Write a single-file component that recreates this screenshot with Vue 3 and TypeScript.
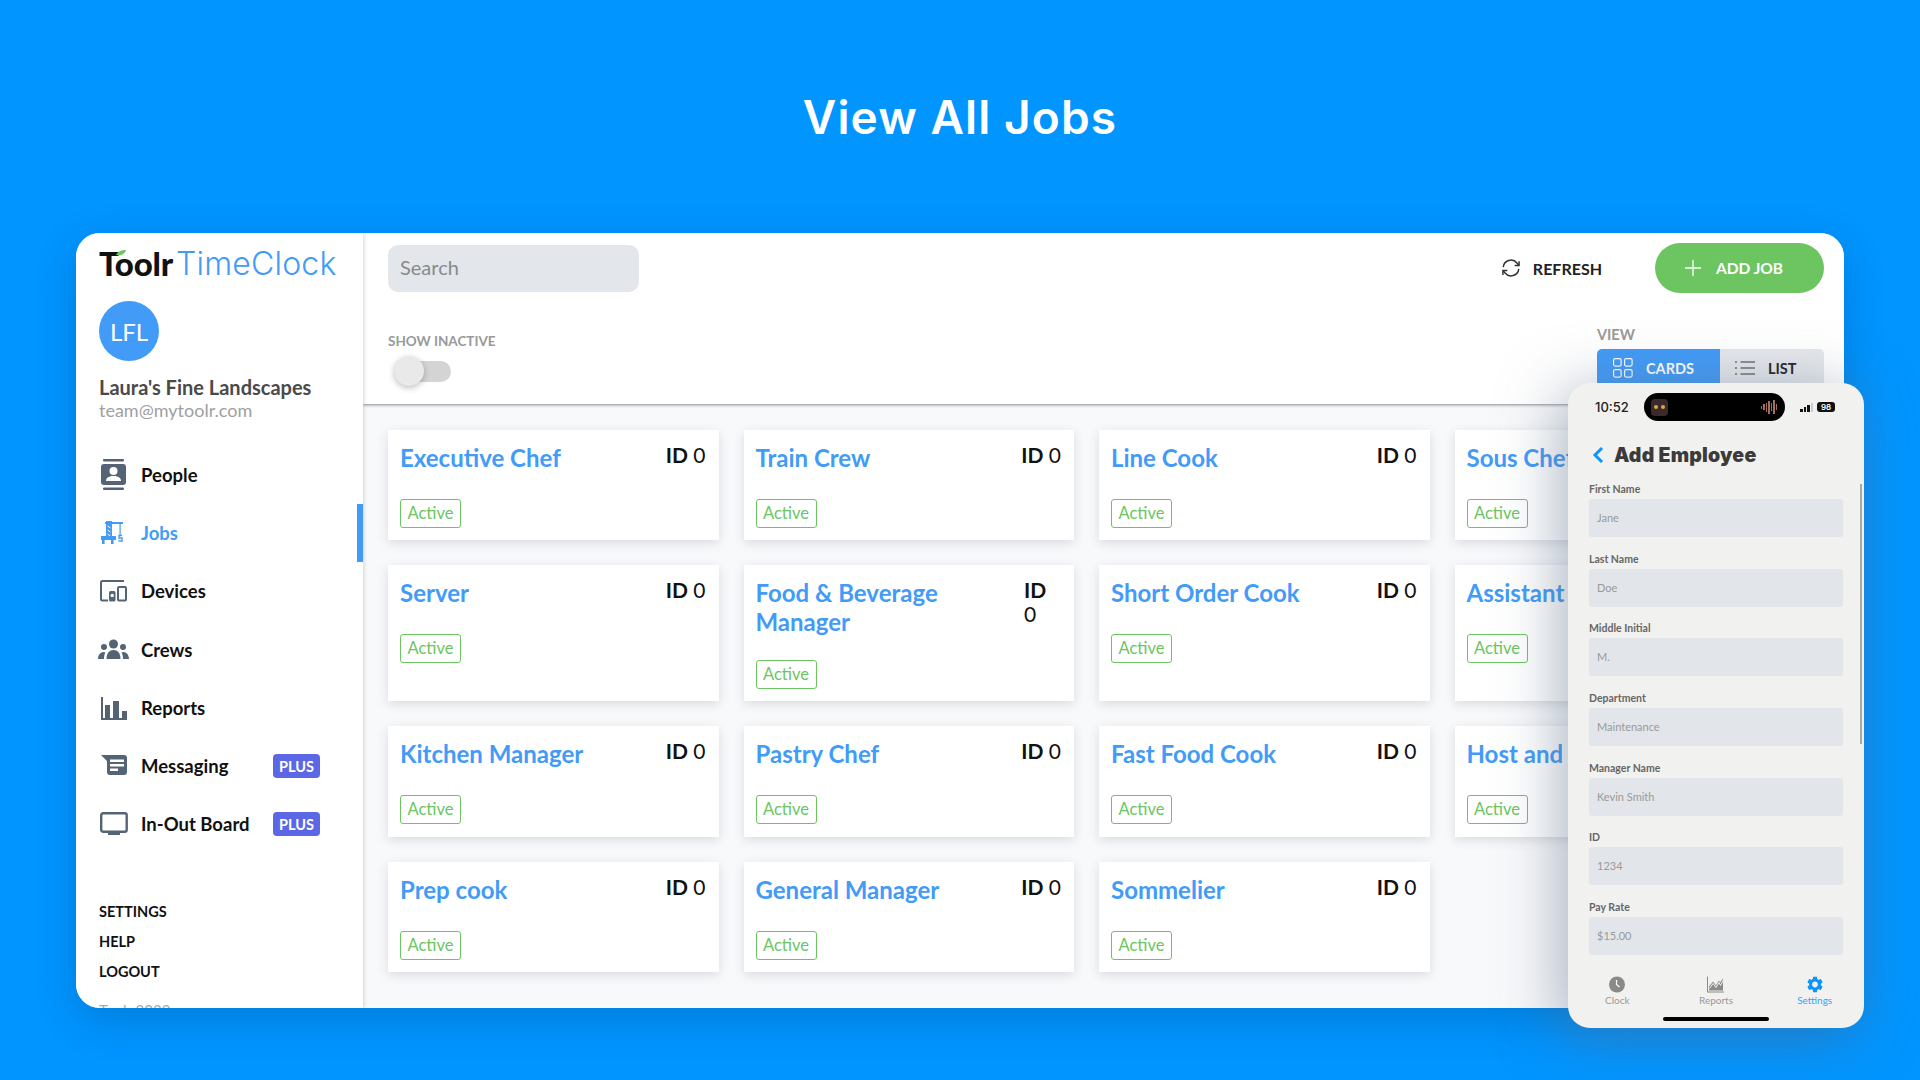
<script setup lang="ts">
interface Job { name: string; wrap?: boolean }
const jobs: Job[] = [
  { name: 'Executive Chef' }, { name: 'Train Crew' }, { name: 'Line Cook' }, { name: 'Sous Chef' },
  { name: 'Server' }, { name: 'Food & Beverage Manager', wrap: true }, { name: 'Short Order Cook' }, { name: 'Assistant Manager' },
  { name: 'Kitchen Manager' }, { name: 'Pastry Chef' }, { name: 'Fast Food Cook' }, { name: 'Host and Hostess' },
  { name: 'Prep cook' }, { name: 'General Manager' }, { name: 'Sommelier' },
]
const nav = [
  { key: 'people', label: 'People' },
  { key: 'jobs', label: 'Jobs', active: true },
  { key: 'devices', label: 'Devices' },
  { key: 'crews', label: 'Crews' },
  { key: 'reports', label: 'Reports' },
  { key: 'messaging', label: 'Messaging', plus: true },
  { key: 'board', label: 'In-Out Board', plus: true },
]
const fields = [
  ['First Name', 'Jane'], ['Last Name', 'Doe'], ['Middle Initial', 'M.'], ['Department', 'Maintenance'],
  ['Manager Name', 'Kevin Smith'], ['ID', '1234'], ['Pay Rate', '$15.00'],
]
const waves = [3, 6, 9, 13, 8, 14, 6]
</script>

<template>
  <div class="page">
    <h1 class="headline">View All Jobs</h1>

    <div class="window">
      <aside class="sidebar">
        <div class="logo">
          <span class="logo-a">Toolr</span><span class="logo-b">TimeClock</span>
          <svg class="leaf" viewBox="0 0 10 6"><path d="M0 5C2 1 6 0 10 0 9 4 5 6 0 5z" fill="#6cc561" /></svg>
        </div>
        <div class="avatar">LFL</div>
        <div class="org">Laura's Fine Landscapes</div>
        <div class="mail">team@mytoolr.com</div>

        <nav class="nav">
          <div v-for="n in nav" :key="n.key" class="nav-row" :class="{ active: n.active }">
            <svg class="nav-icon" viewBox="0 0 32 32">
              <g v-if="n.key === 'people'">
                <rect x="5" y="0" width="21" height="2.6" rx="1" />
                <rect x="3" y="5" width="25" height="21" rx="3" />
                <rect x="5" y="28.4" width="21" height="2.6" rx="1" />
                <circle cx="15.5" cy="12" r="4" fill="#fff" />
                <path d="M8 22c0-3.6 3.4-5 7.5-5s7.5 1.400 7.5 5z" fill="#fff" />
              </g>
              <g v-else-if="n.key === 'jobs'">
                <rect x="7" y="5" width="18" height="2" />
                <rect x="8" y="4" width="6" height="17" />
                <path d="M9.500 9l3 2M9.500 13l3 2M9.500 17l3 2" stroke="#fff" stroke-width="1" />
                <rect x="3" y="19" width="15" height="4" />
                <rect x="4" y="19" width="2.600" height="8" />
                <rect x="13" y="19" width="2.600" height="8" />
                <rect x="21.500" y="7" width="1.200" height="11" />
                <path d="M24 18.500h-3v2.500h3v3h-3.500" fill="none" stroke="currentColor" stroke-width="1.400" />
              </g>
              <g v-else-if="n.key === 'devices'">
                <path d="M26 6H4.500a1.500 1.500 0 0 0-1.500 1.500V24a1.500 1.500 0 0 0 1.500 1.500H10" fill="none" stroke="currentColor" stroke-width="2" />
                <rect x="20" y="12" width="8" height="13.500" rx="1" fill="none" stroke="currentColor" stroke-width="2" />
                <rect x="11" y="16" width="6.500" height="10.500" rx="1.500" />
                <circle cx="14.200" cy="20.500" r="1.700" fill="#fff" />
              </g>
              <g v-else-if="n.key === 'crews'">
                <circle cx="15.500" cy="10" r="4.500" />
                <circle cx="6" cy="13" r="3" />
                <circle cx="25" cy="13" r="3" />
                <path d="M8.500 25c0-6 3-9 7-9s7 3 7 9z" />
                <path d="M0 25c0-4 2.500-7 5.500-7 1 0 1.500.2 2 .5C6.500 20 6 22 6 25zM31 25c0-4-2.500-7-5.500-7-1 0-1.500.2-2 .5 1 1.500 1.500 3.500 1.500 6.500z" />
              </g>
              <g v-else-if="n.key === 'reports'">
                <path d="M3 5h2v21h24v2H3z" />
                <rect x="7" y="13" width="5" height="13" />
                <rect x="15" y="9" width="6" height="17" />
                <rect x="24" y="19" width="5" height="7" />
              </g>
              <g v-else-if="n.key === 'messaging'">
                <path d="M3 5h23a3 3 0 0 1 3 3v14a3 3 0 0 1-3 3H12a3 3 0 0 1-3-3V11z" />
                <rect x="12" y="9.500" width="14" height="2.500" fill="#fff" />
                <rect x="12" y="14" width="14" height="2.500" fill="#fff" />
                <rect x="12" y="18.500" width="8" height="2.500" fill="#fff" />
              </g>
              <g v-else>
                <rect x="3.200" y="5.200" width="25.500" height="18.500" rx="2" fill="none" stroke="currentColor" stroke-width="2.400" />
                <rect x="10" y="24" width="12" height="3" />
              </g>
            </svg>
            <span class="nav-label">{{ n.label }}</span>
            <span v-if="n.plus" class="plus">PLUS</span>
          </div>
        </nav>

        <div class="links">
          <div>SETTINGS</div>
          <div>HELP</div>
          <div>LOGOUT</div>
        </div>
        <div class="copyright">Toolr 2022</div>
      </aside>

      <section class="content">
        <header class="topbar">
          <div class="row-a">
            <div class="search">Search</div>
            <div class="actions">
              <div class="refresh">
                <svg width="22" height="22" viewBox="0 0 24 24" fill="none" stroke="#333" stroke-width="1.600">
                  <path d="M3.500 11a8.500 8.500 0 0 1 15-4.500L20.500 9M20.500 13a8.500 8.500 0 0 1-15 4.500L3.500 15" />
                  <path d="M20.800 4.500V9.300H16M3.200 19.500V14.700H8" />
                </svg>
                <span>REFRESH</span>
              </div>
              <div class="add">
                <svg width="18" height="18" viewBox="0 0 18 18" stroke="#fff" stroke-width="1.300"><path d="M9 1v16M1 9h16" /></svg>
                <span>ADD JOB</span>
              </div>
            </div>
          </div>
          <div class="row-b">
            <div class="inactive">
              <div class="cap">SHOW INACTIVE</div>
              <div class="toggle"><span class="knob"></span></div>
            </div>
            <div class="view">
              <div class="cap">VIEW</div>
              <div class="seg">
                <div class="seg-a">
                  <svg width="20" height="20" viewBox="0 0 20 20" fill="none" stroke="#fff" stroke-width="1.200">
                    <rect x=".6" y=".6" width="7.500" height="7.500" rx="1.500" /><rect x="11.600" y=".6" width="7.500" height="7.500" rx="1.500" />
                    <rect x=".6" y="11.600" width="7.500" height="7.500" rx="1.500" /><rect x="11.600" y="11.600" width="7.500" height="7.500" rx="1.500" />
                  </svg>
                  <span>CARDS</span>
                </div>
                <div class="seg-b">
                  <svg width="20" height="14" viewBox="0 0 20 14" stroke="#333" stroke-width="1.200">
                    <path d="M5.500 1H20M5.500 7H20M5.500 13H20M0 1h2M0 7h2M0 13h2" />
                  </svg>
                  <span>LIST</span>
                </div>
              </div>
            </div>
          </div>
        </header>

        <main class="board">
          <article v-for="j in jobs" :key="j.name" class="card">
            <div class="card-top">
              <div class="title">{{ j.name }}</div>
              <div class="id" :class="{ narrow: j.wrap }"><b>ID</b> 0</div>
            </div>
            <div class="status">Active</div>
          </article>
        </main>
      </section>
    </div>

    <div class="phone">
      <div class="status-bar">
        <span class="time">10:52</span>
        <div class="island">
          <span class="thumb"><i></i><i></i></span>
          <span class="wave"><i v-for="(h, k) in waves" :key="k" :style="{ height: h + 'px' }"></i></span>
        </div>
        <div class="signal"><i></i><i></i><i></i><i class="off"></i></div>
        <div class="battery">98</div>
      </div>
      <div class="phone-head">
        <svg width="12" height="18" viewBox="0 0 12 18" fill="none" stroke="#0a95ff" stroke-width="3"><path d="M10 2L3 9l7 7" /></svg>
        <span>Add Employee</span>
      </div>
      <div class="form">
        <div v-for="f in fields" :key="f[0]" class="field">
          <div class="f-label">{{ f[0] }}</div>
          <div class="f-input">{{ f[1] }}</div>
        </div>
      </div>
      <div class="scroll"></div>
      <div class="tabs">
        <div class="tab">
          <svg width="16" height="16" viewBox="0 0 16 16"><circle cx="8" cy="8" r="8" fill="#8a8a8a" /><path d="M7.500 3.500V8l3 2.500" fill="none" stroke="#fff" stroke-width="1.200" /></svg>
          <span>Clock</span>
        </div>
        <div class="tab">
          <svg width="17" height="16" viewBox="0 0 17 16"><path d="M0 0h1v15h16v1H0z" fill="#8a8a8a" /><path d="M2 14V10l4-5 3 4 3-5 1 2 3-4v12z" fill="#8a8a8a" /><path d="M2.500 12L6 7l3 4 3-5 1.500 3L16 4" fill="none" stroke="#f1f1ef" stroke-width="1" /></svg>
          <span>Reports</span>
        </div>
        <div class="tab on">
          <svg width="18" height="18" viewBox="1.500 1.500 21 21"><path fill="#0a95ff" d="M19.140 12.940c.04-.3.06-.61.06-.94 0-.32-.02-.64-.07-.94l2.030-1.580a.49.49 0 0 0 .12-.61l-1.920-3.320a.488.488 0 0 0-.59-.22l-2.390.96c-.5-.38-1.030-.7-1.620-.94l-.36-2.540a.484.484 0 0 0-.48-.41h-3.840c-.24 0-.43.17-.47.41l-.36 2.540c-.59.24-1.130.57-1.620.94l-2.390-.96c-.22-.08-.47 0-.59.22L2.740 8.870c-.12.21-.08.47.12.61l2.030 1.580c-.05.3-.09.63-.09.94s.02.64.07.94l-2.030 1.580a.49.49 0 0 0-.12.61l1.920 3.320c.12.22.37.29.59.22l2.390-.96c.5.38 1.030.7 1.620.94l.36 2.540c.05.24.24.41.48.41h3.840c.24 0 .44-.17.47-.41l.36-2.540c.59-.24 1.130-.56 1.620-.94l2.390.96c.22.08.47 0 .59-.22l1.920-3.320c.12-.22.07-.47-.12-.61l-2.010-1.580zM12 15.600c-1.980 0-3.600-1.620-3.600-3.600s1.620-3.600 3.600-3.600 3.600 1.620 3.600 3.600-1.620 3.600-3.600 3.600z" /></svg>
          <span>Settings</span>
        </div>
      </div>
      <div class="home"></div>
    </div>
  </div>
</template>

<style scoped>
.page {
  position: relative;
  width: 1920px;
  height: 1080px;
  overflow: hidden;
  background: #0095ff;
  font-family: Lato, "Liberation Sans", sans-serif;
}
.headline {
  margin: 0;
  height: 233px;
  display: flex;
  align-items: center;
  justify-content: center;
  font-family: Inter, sans-serif;
  font-size: 46px;
  font-weight: 600;
  color: #fff;
  letter-spacing: 1.100px;
}
.window {
  margin: 0 76px;
  height: 775px;
  display: flex;
  border-radius: 24px;
  overflow: hidden;
  background: #f8f9fb;
  box-shadow: 0 12px 40px rgba(0, 40, 90, 0.22);
}
.sidebar {
  position: relative;
  z-index: 2;
  width: 287px;
  flex: none;
  box-sizing: border-box;
  padding-left: 23px;
  background: #fff;
  box-shadow: 1px 0 4px rgba(0, 0, 0, 0.16);
}
.logo {
  position: relative;
  margin-top: 14px;
  height: 32px;
  display: flex;
  align-items: center;
  white-space: nowrap;
}
.logo-a {
  font-weight: 900;
  font-size: 33px;
  color: #111;
  letter-spacing: -0.2px;
}
.logo-b {
  margin-left: 3px;
  font-family: Inter, sans-serif;
  font-weight: 300;
  font-size: 32px;
  color: #429bf7;
  letter-spacing: 0.2px;
}
.leaf {
  position: absolute;
  left: 17px;
  top: 3px;
  width: 10px;
  height: 6px;
}
.avatar {
  margin-top: 22px;
  width: 60px;
  height: 60px;
  border-radius: 50%;
  background: #429bf7;
  color: #fff;
  font-size: 24px;
  display: flex;
  align-items: center;
  justify-content: center;
}
.org {
  margin-top: 14px;
  font-size: 20px;
  font-weight: 700;
  line-height: 24px;
  color: #4a4a4a;
}
.mail {
  font-size: 18px;
  line-height: 22px;
  color: #a0a0a0;
}
.nav {
  margin-top: 25px;
}
.nav-row {
  height: 58.200px;
  display: flex;
  align-items: center;
  gap: 11px;
  box-sizing: border-box;
  border-right: 6px solid transparent;
  padding-right: 37px;
  color: #111;
}
.nav-row.active {
  border-right-color: #429bf7;
  color: #429bf7;
}
.nav-icon {
  width: 32px;
  height: 32px;
  flex: none;
  margin-left: -1px;
  color: #546474;
  fill: #546474;
}
.active .nav-icon {
  color: #429bf7;
  fill: #429bf7;
}
.nav-label {
  font-size: 18.500px;
  font-weight: 700;
  white-space: nowrap;
}
.plus {
  margin-left: auto;
  width: 47px;
  height: 24px;
  border-radius: 4px;
  background: #5b67e5;
  color: #fff;
  font-size: 14.500px;
  font-weight: 700;
  display: flex;
  align-items: center;
  justify-content: center;
}
.links {
  margin-top: 44px;
  font-size: 14.500px;
  font-weight: 700;
  line-height: 30px;
  color: #111;
}
.copyright {
  margin-top: 14px;
  font-size: 15px;
  line-height: 18px;
  color: #aaa;
}
.content {
  flex: 1;
  min-width: 0;
  display: flex;
  flex-direction: column;
}
.topbar {
  position: relative;
  z-index: 1;
  height: 171px;
  flex: none;
  box-sizing: border-box;
  padding: 10px 20px 0 25px;
  background: #fff;
  box-shadow: 0 1px 3px rgba(0, 0, 0, 0.45);
}
.row-a,
.row-b {
  display: flex;
  justify-content: space-between;
}
.row-a {
  align-items: center;
  height: 50px;
}
.row-b {
  margin-top: 33px;
}
.search {
  width: 251px;
  height: 47px;
  box-sizing: border-box;
  padding-left: 12px;
  border-radius: 10px;
  background: #e3e6ea;
  font-size: 20px;
  line-height: 45px;
  color: #8a8a8a;
}
.actions {
  display: flex;
  align-items: center;
}
.refresh {
  display: flex;
  align-items: center;
  gap: 11px;
  margin-right: 53px;
  font-size: 16px;
  font-weight: 700;
  color: #222;
}
.add {
  width: 169px;
  height: 50px;
  box-sizing: border-box;
  padding-left: 29px;
  display: flex;
  align-items: center;
  gap: 14px;
  border-radius: 25px;
  background: #6cc561;
  color: #fff;
  font-size: 15.500px;
  font-weight: 700;
}
.cap {
  font-size: 13.500px;
  font-weight: 700;
  line-height: 16px;
  color: #999;
}
.inactive {
  margin-top: 7px;
}
.toggle {
  position: relative;
  margin: 12px 0 0 6px;
  width: 57px;
  height: 21px;
  border-radius: 11px;
  background: #d4d4d4;
}
.knob {
  position: absolute;
  left: 0;
  top: -5px;
  width: 30px;
  height: 30px;
  border-radius: 50%;
  background: #e9e9e9;
  box-shadow: 0 2px 6px rgba(0, 0, 0, 0.25);
}
.view {
  padding-top: 1px;
}
.view .cap {
  margin-bottom: 6px;
  font-size: 14.500px;
}
.seg {
  display: flex;
  width: 227px;
  height: 38px;
  border-radius: 5px;
  overflow: hidden;
  font-size: 14.500px;
  font-weight: 700;
}
.seg-a,
.seg-b {
  display: flex;
  align-items: center;
  gap: 13px;
}
.seg-a {
  width: 123px;
  padding-left: 16px;
  box-sizing: border-box;
  background: #429bf7;
  color: #fff;
}
.seg-b {
  flex: 1;
  padding-left: 15px;
  background: #e6e8ec;
  color: #222;
}
.board {
  flex: 1;
  padding: 26px 25px;
  display: grid;
  grid-template-columns: repeat(4, 330.500px);
  grid-auto-rows: min-content;
  gap: 25px;
  overflow: hidden;
}
.card {
  box-sizing: border-box;
  padding: 13px 13px 12.200px 12px;
  background: #fff;
  box-shadow: 0 3px 10px rgba(60, 70, 90, 0.16);
}
.card-top {
  display: flex;
  justify-content: space-between;
  gap: 20px;
  min-height: 32px;
  margin-bottom: 24px;
}
.title {
  font-size: 24px;
  font-weight: 700;
  line-height: 29px;
  color: #429bf7;
}
.id {
  flex: none;
  font-size: 21px;
  line-height: 24px;
  color: #111;
}
.id b {
  font-weight: 700;
}
.id.narrow {
  width: 37px;
}
.status {
  display: block;
  width: fit-content;
  box-sizing: border-box;
  height: 29px;
  padding: 0 6.500px;
  border: 1px solid #6cc561;
  border-radius: 3px;
  font-size: 16.500px;
  line-height: 27px;
  color: #6cc561;
}
.phone {
  position: absolute;
  z-index: 5;
  left: 1568px;
  top: 383px;
  width: 296px;
  height: 645px;
  border-radius: 22px;
  background: #f1f1ef;
  box-shadow: -8px 8px 60px rgba(90, 110, 135, 0.5);
  overflow: hidden;
}
.status-bar {
  height: 48px;
  box-sizing: border-box;
  display: flex;
  align-items: center;
}
.time {
  margin-left: 27px;
  width: 49px;
  font-family: Inter, sans-serif;
  font-size: 13px;
  font-weight: 500;
  color: #222;
}
.island {
  width: 141px;
  height: 28px;
  box-sizing: border-box;
  padding: 0 8px 0 7px;
  border-radius: 14px;
  background: #000;
  display: flex;
  align-items: center;
  justify-content: space-between;
}
.thumb {
  width: 17px;
  height: 17px;
  border-radius: 4px;
  background: #3a2a2a;
  display: flex;
  align-items: center;
  justify-content: center;
  gap: 3px;
}
.thumb i {
  width: 4px;
  height: 4px;
  border-radius: 50%;
  background: #d8a84a;
}
.wave {
  display: flex;
  align-items: center;
  gap: 1px;
}
.wave i {
  width: 1.500px;
  background: #a5705a;
}
.signal {
  margin-left: 15px;
  display: flex;
  align-items: flex-end;
  gap: 1px;
  height: 9px;
}
.signal i {
  width: 2.500px;
  background: #111;
}
.signal i:nth-child(1) { height: 3px; }
.signal i:nth-child(2) { height: 5px; }
.signal i:nth-child(3) { height: 7px; }
.signal i.off { height: 9px; background: #ccc; }
.battery {
  margin-left: 4px;
  width: 18px;
  height: 10px;
  border-radius: 3px;
  background: #111;
  color: #fff;
  font-family: Inter, sans-serif;
  font-size: 8px;
  font-weight: 600;
  line-height: 10px;
  text-align: center;
}
.phone-head {
  height: 48px;
  padding-left: 24px;
  display: flex;
  align-items: center;
  gap: 10px;
  font-family: Inter, sans-serif;
  font-size: 19.500px;
  font-weight: 900;
  color: #3b3b3b;
  letter-spacing: 0.2px;
}
.form {
  padding: 0 21px;
}
.field {
  height: 69.700px;
}
.f-label {
  height: 20px;
  font-size: 10.500px;
  font-weight: 700;
  line-height: 20px;
  color: #666;
}
.f-input {
  height: 38px;
  box-sizing: border-box;
  padding-left: 8px;
  border-radius: 3px;
  background: #e2e6ea;
  font-size: 11px;
  line-height: 38px;
  color: #999;
}
.scroll {
  position: absolute;
  left: 292px;
  top: 101px;
  width: 2px;
  height: 260px;
  background: #a8a8a8;
}
.tabs {
  position: absolute;
  left: 0;
  top: 593px;
  display: grid;
  grid-template-columns: repeat(3, 1fr);
  width: 296px;
}
.tab {
  display: flex;
  flex-direction: column;
  align-items: center;
  color: #999;
  font-size: 10px;
  line-height: 14px;
}
.tab svg {
  height: 17px;
}
.tab.on {
  color: #35a4ff;
}
.home {
  position: absolute;
  left: 95px;
  top: 634px;
  width: 106px;
  height: 4px;
  border-radius: 2px;
  background: #000;
}
</style>

<style>
html, body { margin: 0; padding: 0; }
</style>
